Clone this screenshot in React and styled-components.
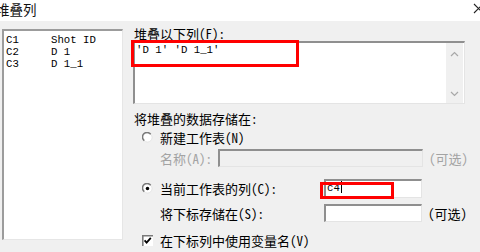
import React from 'react'
import styled, { createGlobalStyle } from 'styled-components'

const Global = createGlobalStyle`
    html, body {
        margin: 0;
        padding: 0;
        background: #f0f0f0;
        width: 480px;
        height: 252px;
        overflow: hidden;
    }
`

const Dialog = styled.div`
    display: flex;
    flex-direction: column;
    width: 480px;
    height: 252px;
    overflow: hidden;
    font-family: "Noto Sans CJK SC", sans-serif;
    font-feature-settings: "hwid";
    font-size: 13px;
    color: #000;
`

const TitleBar = styled.div`
    height: 21px;
    background: #fff;
    display: flex;
    justify-content: space-between;
    align-items: center;
    flex-shrink: 0;
`

const Title = styled.span`
    font-size: 13.5px;
    margin-left: -4px;
    margin-top: -3px;
    color: #111;
`

const Close = styled.svg`
    width: 11px;
    height: 11px;
    margin-right: -4px;
    margin-top: -5px;
`

const Main = styled.div`
    display: flex;
    padding: 8px 0 0 2px;
`

const ListBox = styled.div`
    width: 116px;
    height: 205px;
    background: #fff;
    border-top: 2px solid #9c9c9c;
    border-left: 2px solid #9c9c9c;
    border-right: 1px solid #e6e6e6;
    border-bottom: 1px solid #e6e6e6;
    padding: 3px 0 0 2px;
    box-sizing: content-box;
    margin-top: 0;
`

const ListRow = styled.div`
    display: flex;
    font-family: "Liberation Mono", monospace;
    font-size: 10.7px;
    line-height: 12px;
    height: 12px;
`

const Col = styled.span`
    width: ${({ w }) => w}px;
`

const Right = styled.div`
    display: flex;
    flex-direction: column;
    margin-left: 10px;
    margin-top: -2px;
`

const Label = styled.div`
    line-height: 14px;
    height: 14px;
    margin-left: 1px;
    margin-top: ${({ top }) => top || 0}px;
`

const TextArea = styled.div`
    position: relative;
    width: 329px;
    height: 60px;
    background: #fff;
    border-top: 2px solid #8f8f8f;
    border-left: 2px solid #8f8f8f;
    border-right: 1px solid #e4e4e4;
    border-bottom: 1px solid #e4e4e4;
    display: flex;
`

const AreaText = styled.div`
    flex: 1;
    font-family: "Liberation Mono", monospace;
    font-size: 10.7px;
    line-height: 12px;
    padding: 1px 0 0 1px;
    white-space: pre;
`

const ScrollBar = styled.div`
    width: 17px;
    background: #f0f0f0;
    margin-right: 1px;
    display: flex;
    flex-direction: column;
    justify-content: space-between;
    align-items: center;
    padding: 8px 0 6px;
`

const Mark = styled.span`
    position: absolute;
    left: ${({ x }) => x}px;
    top: ${({ y }) => y}px;
    width: ${({ w }) => w}px;
    height: ${({ h }) => h}px;
    border: 3px solid #ff0000;
    box-sizing: border-box;
    pointer-events: none;
`

const Row = styled.div`
    display: flex;
    align-items: center;
    height: ${({ h }) => h}px;
    margin-top: ${({ top }) => top}px;
    padding-left: ${({ indent }) => indent}px;
`

const Text = styled.span`
    width: ${({ w }) => (w ? `${w}px` : 'auto')};
    color: ${({ dim }) => (dim ? '#a3a3a3' : '#000')};
    white-space: nowrap;
    flex-shrink: 0;
`

const Toggle = styled.svg`
    width: 11px;
    height: 11px;
    margin-right: 7px;
    flex-shrink: 0;
`

const Input = styled.div`
    position: relative;
    width: ${({ w }) => w}px;
    height: ${({ h }) => h}px;
    box-sizing: border-box;
    background: ${({ disabled }) => (disabled ? '#f0f0f0' : '#fff')};
    border-top: 2px solid #8f8f8f;
    border-left: 2px solid #8f8f8f;
    border-right: 1px solid #e4e4e4;
    border-bottom: 1px solid #e4e4e4;
    font-family: "Liberation Mono", monospace;
    font-size: 10.7px;
    line-height: 14px;
    padding-left: 1px;
    flex-shrink: 0;
`

const Caret = styled.span`
    display: inline-block;
    width: 1px;
    height: 12px;
    background: #000;
    vertical-align: -2px;
    margin-left: 1px;
`

const Optional = styled(Text)`
    margin-left: 6px;
`

const Radio = ({ checked }) => (
    <Toggle viewBox="0 0 12 12">
        <circle cx="6" cy="6" r="5" fill="#fff" stroke="#e2e2e2" strokeWidth="1" />
        <path d="M 9.5 2.5 A 5 5 0 1 0 2.5 9.5" fill="none" stroke="#7a7a7a" strokeWidth="1.6" />
        {checked && <circle cx="6" cy="6" r="1.9" fill="#000" />}
    </Toggle>
)

const Check = () => (
    <Toggle viewBox="0 0 11 11">
        <rect x="0" y="0" width="11" height="11" fill="#fff" />
        <path d="M 0.8 11 V 0.8 H 11" fill="none" stroke="#7a7a7a" strokeWidth="1.6" />
        <path d="M 2.6 5.4 L 4.6 7.6 L 8.8 2.8" fill="none" stroke="#000" strokeWidth="1.8" />
    </Toggle>
)

const Chevron = ({ up }) => (
    <svg width="9" height="6" viewBox="0 0 9 6">
        <path d={up ? 'M1 5 L4.5 1.5 L8 5' : 'M1 1 L4.5 4.5 L8 1'} fill="none" stroke="#a8a8a8" strokeWidth="1.2" />
    </svg>
)

const columns = [
    ['C1', 'Shot ID'],
    ['C2', 'D 1'],
    ['C3', 'D 1_1'],
]

const App = () => {
    return (
        <>
            <Global />
            <Dialog>
                <TitleBar>
                    <Title>堆叠列</Title>
                    <Close viewBox="0 0 11 11">
                        <path d="M1 1 L10 10 M10 1 L1 10" stroke="#222" strokeWidth="1.1" />
                    </Close>
                </TitleBar>
                <Main>
                    <ListBox>
                        {columns.map(([c, name]) => (
                            <ListRow key={c}>
                                <Col w={45}>{c}</Col>
                                <span>{name}</span>
                            </ListRow>
                        ))}
                    </ListBox>
                    <Right>
                        <Label>堆叠以下列(F):</Label>
                        <TextArea>
                            <AreaText>'D 1' 'D 1_1'</AreaText>
                            <ScrollBar>
                                <Chevron up />
                                <Chevron />
                            </ScrollBar>
                            <Mark x={-4} y={-3} w={168} h={27} />
                        </TextArea>
                        <Label top={8}>将堆叠的数据存储在:</Label>
                        <Row h={16} top={3} indent={9}>
                            <Radio />
                            <Text>新建工作表(N)</Text>
                        </Row>
                        <Row h={18} top={4} indent={27}>
                            <Text dim w={58}>名称(A):</Text>
                            <Input disabled w={205} h={18} />
                            <Optional dim>（可选）</Optional>
                        </Row>
                        <Row h={19} top={12} indent={9}>
                            <Radio checked />
                            <Text w={164}>当前工作表的列(C):</Text>
                            <Input w={98} h={19}>
                                c4<Caret />
                                <Mark x={-6} y={1} w={74} h={17} />
                            </Input>
                        </Row>
                        <Row h={18} top={6} indent={27}>
                            <Text w={164}>将下标存储在(S):</Text>
                            <Input w={98} h={18} />
                            <Optional>（可选）</Optional>
                        </Row>
                        <Row h={14} top={11} indent={9}>
                            <Check />
                            <Text>在下标列中使用变量名(V)</Text>
                        </Row>
                    </Right>
                </Main>
            </Dialog>
        </>
    )
}

export default App
